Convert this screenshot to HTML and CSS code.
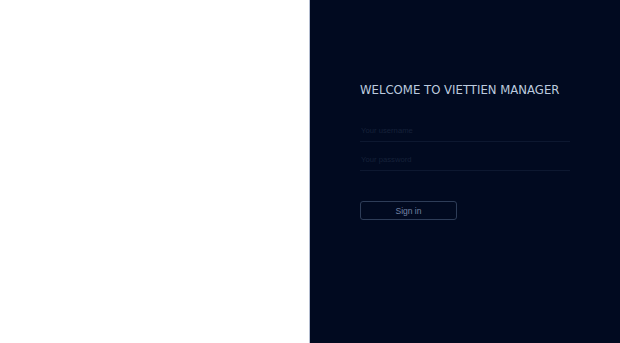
FILE: index.html
```html
<!DOCTYPE html>
<html>
<head>
<meta charset="utf-8">
<link rel="stylesheet" href="styles.css">
</head>
<body>
<div class="page">
  <div class="left"></div>
  <div class="right">
    <form class="login">
      <h1 class="title">WELCOME TO VIETTIEN MANAGER</h1>
      <input class="field" type="text" placeholder="Your username">
      <input class="field" type="password" placeholder="Your password">
      <button class="btn" type="button">Sign in</button>
    </form>
  </div>
</div>
</body>
</html>
```
FILE: styles.css
```css
html, body {
  margin: 0;
  padding: 0;
  height: 100%;
}
body {
  font-family: "DejaVu Sans", sans-serif;
}
.page {
  display: flex;
  height: 100%;
}
.left {
  width: 309px;
  background: #ffffff;
}
.right {
  flex: 1;
  background: #010a20;
  border-left: 1px solid #b4bdd0;
  padding: 81px 0 0 50px;
  box-sizing: border-box;
}
.login {
  display: flex;
  flex-direction: column;
  width: 210px;
}
.title {
  margin: 0 0 14px 0;
  font-size: 11.7px;
  font-weight: normal;
  color: #bccadf;
  white-space: nowrap;
  line-height: 18px;
}
.field {
  background: transparent;
  border: none;
  border-bottom: 1px solid #0d1830;
  color: #c0c8d8;
  font-family: "Liberation Sans", Arial, sans-serif;
  font-size: 7.7px;
  padding: 11px 0 4px 1px;
  height: 29px;
  box-sizing: border-box;
  outline: none;
  margin: 0;
}
.field::placeholder {
  color: #162139;
}
.btn {
  margin-top: 30px;
  width: 97px;
  height: 19px;
  background: transparent;
  border: 1px solid #2e3d58;
  border-radius: 3px;
  color: #7483a3;
  font-family: "Liberation Sans", Arial, sans-serif;
  font-size: 8.5px;
  padding: 0;
}
```
